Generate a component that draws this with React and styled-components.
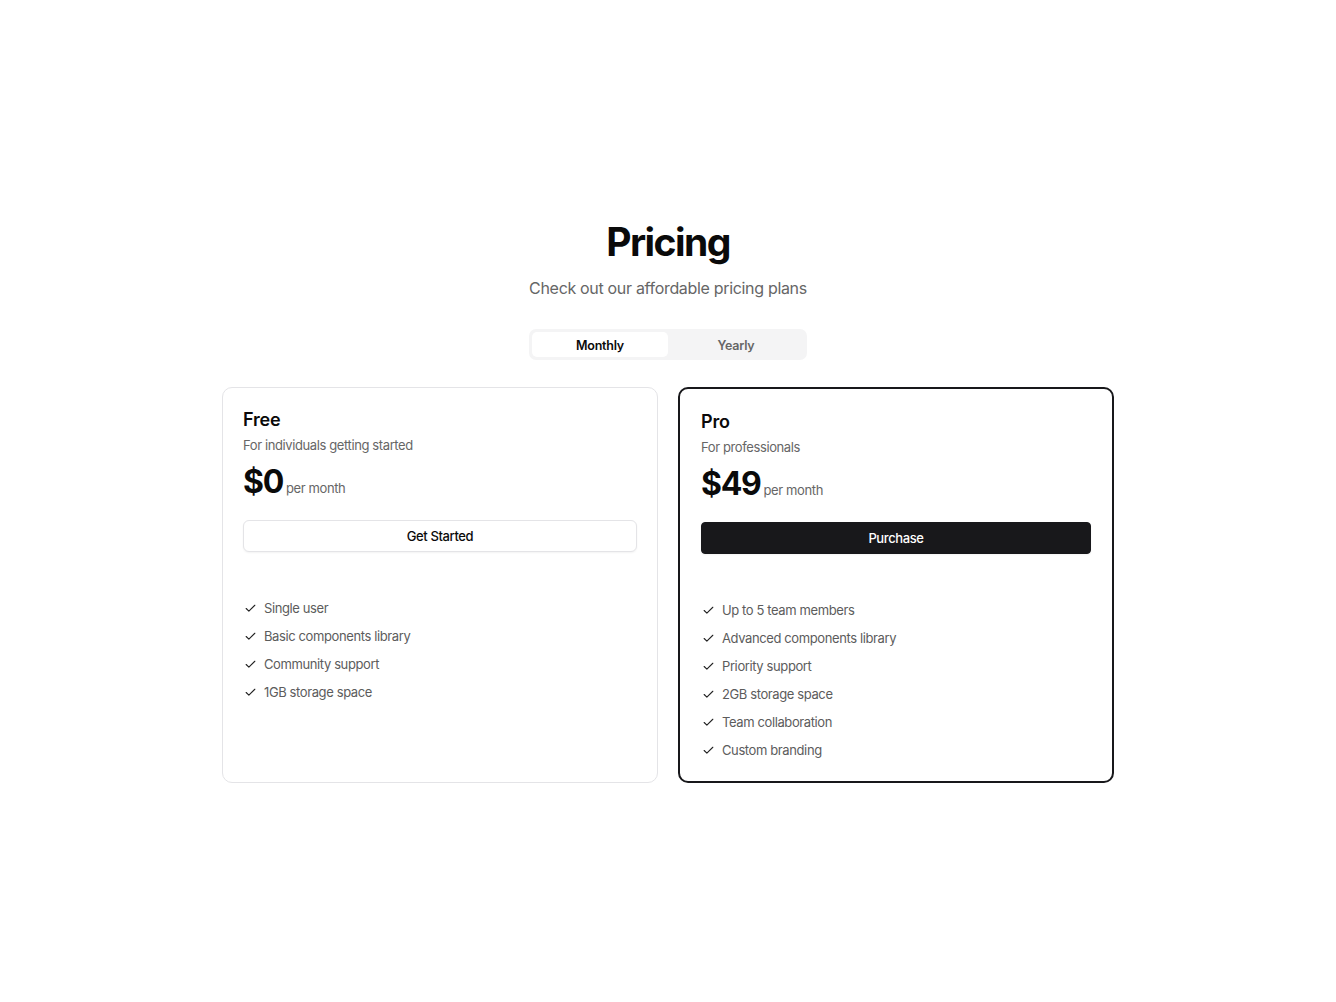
import React, { useState } from 'react'
import styled, { createGlobalStyle } from 'styled-components'
import { Check } from 'lucide-react'

const GlobalStyle = createGlobalStyle`
  * { box-sizing: border-box; }
  body {
    margin: 0;
    background: #ffffff;
    font-family: Inter, "Noto Sans", sans-serif;
    color: #0a0a0a;
    -webkit-font-smoothing: antialiased;
  }
`

const plans = [
  {
    name: 'Free',
    description: 'For individuals getting started',
    price: '$0',
    cta: 'Get Started',
    highlighted: false,
    features: [
      'Single user',
      'Basic components library',
      'Community support',
      '1GB storage space',
    ],
  },
  {
    name: 'Pro',
    description: 'For professionals',
    price: '$49',
    cta: 'Purchase',
    highlighted: true,
    features: [
      'Up to 5 team members',
      'Advanced components library',
      'Priority support',
      '2GB storage space',
      'Team collaboration',
      'Custom branding',
    ],
  },
]

const App = () => {
  const [period, setPeriod] = useState('monthly')

  return (
    <>
      <GlobalStyle />
      <Page>
        <Title>Pricing</Title>
        <Subtitle>Check out our affordable pricing plans</Subtitle>
        <Toggle>
          <Toggle.Tab active={period === 'monthly'} onClick={() => setPeriod('monthly')}>
            Monthly
          </Toggle.Tab>
          <Toggle.Tab active={period === 'yearly'} onClick={() => setPeriod('yearly')}>
            Yearly
          </Toggle.Tab>
        </Toggle>
        <Grid>
          {plans.map(plan => (
            <Card key={plan.name} highlighted={plan.highlighted}>
              <Card.Name>{plan.name}</Card.Name>
              <Card.Description>{plan.description}</Card.Description>
              <Price>
                <Price.Amount>{plan.price}</Price.Amount>
                <Price.Period>per month</Price.Period>
              </Price>
              <Button primary={plan.highlighted}>{plan.cta}</Button>
              <Features>
                {plan.features.map(feature => (
                  <Features.Item key={feature}>
                    <Check size={13} strokeWidth={2} />
                    {feature}
                  </Features.Item>
                ))}
              </Features>
            </Card>
          ))}
        </Grid>
      </Page>
    </>
  )
}

const Page = styled.main`
  display: flex;
  flex-direction: column;
  align-items: center;
  padding: 219px 24px 80px;
`

const Title = styled.h1`
  margin: 0;
  font-size: 39px;
  line-height: 46px;
  font-weight: 700;
  letter-spacing: -0.04em;
  color: #0a0a0a;
`

const Subtitle = styled.p`
  margin: 11px 0 0;
  font-size: 16px;
  line-height: 24px;
  letter-spacing: -0.02em;
  color: #666666;
`

const Toggle = styled.div`
  display: grid;
  grid-template-columns: 1fr 1fr;
  width: 278px;
  height: 31px;
  margin-top: 29px;
  padding: 3px;
  border-radius: 7px;
  background: #f4f4f5;
`

Toggle.Tab = styled.button`
  border: 0;
  border-radius: 5px;
  padding: 1px 0 0;
  font-family: inherit;
  font-size: 12.5px;
  letter-spacing: -0.02em;
  font-weight: 600;
  cursor: pointer;
  background: ${props => (props.active ? '#ffffff' : 'transparent')};
  color: ${props => (props.active ? '#0a0a0a' : '#666666')};
`

const Grid = styled.div`
  display: grid;
  grid-template-columns: 1fr 1fr;
  gap: 20px;
  width: 892px;
  margin-top: 27px;
`

const Card = styled.section`
  display: flex;
  flex-direction: column;
  padding: ${props => (props.highlighted ? '21px' : '20px')};
  border-radius: 10px;
  border: ${props => (props.highlighted ? '2px solid #18181b' : '1px solid #e4e4e7')};
  background: #ffffff;
`

Card.Name = styled.h2`
  margin: 0;
  font-size: 18px;
  line-height: 24px;
  font-weight: 600;
  letter-spacing: -0.01em;
`

Card.Description = styled.p`
  margin: 4px 0 0;
  font-size: 13px;
  line-height: 18px;
  letter-spacing: -0.03em;
  color: #666666;
`

const Price = styled.div`
  display: flex;
  align-items: baseline;
  gap: 3px;
  margin-top: 8px;
  height: 40px;
`

Price.Amount = styled.span`
  font-size: 32px;
  line-height: 40px;
  font-weight: 700;
  letter-spacing: -0.04em;
`

Price.Period = styled.span`
  font-size: 13px;
  letter-spacing: -0.03em;
  color: #666666;
`

const Button = styled.button`
  margin-top: 18px;
  height: 32px;
  width: 100%;
  border-radius: ${props => (props.primary ? '4px' : '6px')};
  border: 1px solid ${props => (props.primary ? '#18181b' : '#e4e4e7')};
  background: ${props => (props.primary ? '#18181b' : '#ffffff')};
  color: ${props => (props.primary ? '#ffffff' : '#0a0a0a')};
  box-shadow: 0 1px 2px rgba(0, 0, 0, 0.05);
  font-family: inherit;
  font-size: 13px;
  letter-spacing: -0.03em;
  font-weight: 500;
  cursor: pointer;
`

const Features = styled.ul`
  list-style: none;
  margin: 46px 0 0;
  padding: 0;
  display: flex;
  flex-direction: column;
  gap: 8px;
`

Features.Item = styled.li`
  display: flex;
  align-items: center;
  gap: 7px;
  font-size: 13px;
  line-height: 20px;
  letter-spacing: -0.03em;
  color: #5c5c5c;
  svg {
    color: #222222;
    flex-shrink: 0;
    margin-left: 1px;
  }
`

export default App
